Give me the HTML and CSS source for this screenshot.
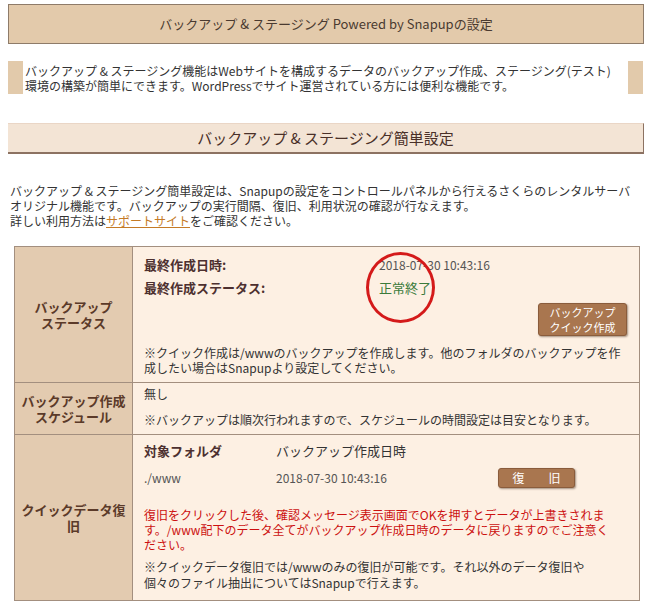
FILE: index.html
```html
<!DOCTYPE html>
<html lang="ja">
<head>
<meta charset="utf-8">
<title>バックアップ &amp; ステージング</title>
<link rel="stylesheet" href="styles.css">
</head>
<body>
<div class="page">
  <h1 class="title-box">バックアップ &amp; ステージング Powered by Snapupの設定</h1>

  <div class="intro">バックアップ &amp; ステージング機能はWebサイトを構成するデータのバックアップ作成、ステージング(テスト)<br>環境の構築が簡単にできます。WordPressでサイト運営されている方には便利な機能です。</div>

  <h2 class="section-head">バックアップ &amp; ステージング簡単設定</h2>

  <p class="lead">バックアップ &amp; ステージング簡単設定は、Snapupの設定をコントロールパネルから行えるさくらのレンタルサーバ<br>オリジナル機能です。バックアップの実行間隔、復旧、利用状況の確認が行なえます。<br>詳しい利用方法は<a class="link" href="#">サポートサイト</a>をご確認ください。</p>

  <table class="settings">
    <tr>
      <th class="head-cell">バックアップ<br>ステータス</th>
      <td class="data-cell status-cell">
        <div class="status-grid">
          <span class="label">最終作成日時:</span><span class="value">2018-07-30 10:43:16</span>
          <span class="label">最終作成ステータス:</span><span class="value ok">正常終了</span>
        </div>
        <div class="btn-row"><button class="btn btn-quick">バックアップ<br>クイック作成</button></div>
        <p class="note note-status">※クイック作成は/wwwのバックアップを作成します。他のフォルダのバックアップを作<br>成したい場合はSnapupより設定してください。</p>
        <span class="circle"></span>
      </td>
    </tr>
    <tr>
      <th class="head-cell">バックアップ作成<br>スケジュール</th>
      <td class="data-cell schedule-cell">
        <div class="line">無し</div>
        <p class="note note-sched">※バックアップは順次行われますので、スケジュールの時間設定は目安となります。</p>
      </td>
    </tr>
    <tr>
      <th class="head-cell">クイックデータ復<br>旧</th>
      <td class="data-cell restore-cell">
        <div class="restore-grid">
          <span class="label">対象フォルダ</span><span class="col-head">バックアップ作成日時</span><span></span>
          <span class="value">./www</span><span class="value">2018-07-30 10:43:16</span><span><button class="btn btn-restore">復　　旧</button></span>
        </div>
        <p class="warn">復旧をクリックした後、確認メッセージ表示画面でOKを押すとデータが上書きされま<br>す。/www配下のデータ全てがバックアップ作成日時のデータに戻りますのでご注意く<br>ださい。</p>
        <p class="note note-restore">※クイックデータ復旧では/wwwのみの復旧が可能です。それ以外のデータ復旧や<br>個々のファイル抽出についてはSnapupで行えます。</p>
      </td>
    </tr>
  </table>
</div>
</body>
</html>
```

FILE: styles.css
```css
html, body {
  margin: 0;
  padding: 0;
  background: #ffffff;
}

body {
  padding: 4px 0 0 8px;
  font-family: "Noto Sans CJK JP", "Noto Sans", sans-serif;
  font-size: 12px;
  color: #333333;
}

.page {
  width: 636px;
}

.title-box {
  margin: 0;
  height: 38px;
  line-height: 38px;
  border: 1px solid #8e7b69;
  background: #e3caab;
  text-align: center;
  font-size: 13px;
  font-weight: normal;
  color: #4a3a30;
}

.intro {
  margin-top: 17px;
  width: 603px;
  height: 29px;
  padding: 2px 0 2px 2px;
  border-left: 15px solid #e2caab;
  border-right: 15px solid #e2caab;
  line-height: 15px;
  white-space: nowrap;
  color: #333333;
}

.section-head {
  margin: 29px 0 0 0;
  height: 28px;
  line-height: 28px;
  background: #f3e4d5;
  border-top: 1px solid #ead6c6;
  border-bottom: 2px solid #8c7262;
  border-right: 1px solid #8c7262;
  text-align: center;
  font-size: 15px;
  font-weight: normal;
  color: #4a3028;
}

.lead {
  margin: 29px 0 0 0;
  padding-left: 2px;
  line-height: 15px;
  white-space: nowrap;
}

.link {
  color: #c47a26;
  text-decoration: underline;
}

.settings {
  margin: 18px 0 0 6px;
  width: 626px;
  border-collapse: collapse;
}

.head-cell {
  width: 117px;
  padding: 0;
  background: #e3cbb0;
  border: 1px solid #a38f7f;
  color: #5b3a29;
  font-size: 13px;
  font-weight: bold;
  line-height: 16px;
  text-align: center;
  vertical-align: middle;
}

.data-cell {
  position: relative;
  background: #fdf0e3;
  border: 1px solid #a38f7f;
  padding: 0 12px 0 11px;
  vertical-align: top;
  line-height: 16px;
}

.status-cell {
  padding-top: 10px;
  padding-bottom: 7px;
}

.status-grid {
  display: grid;
  grid-template-columns: 235px auto;
  row-gap: 7px;
}

.label {
  font-weight: bold;
  color: #4d3030;
  font-size: 13px;
}

.value {
  color: #555555;
}

.ok {
  color: #3a7a3a;
  font-size: 13px;
}

.btn-row {
  display: flex;
  justify-content: flex-end;
  margin-top: 7px;
}

.btn {
  font-family: "Noto Sans CJK JP", "Noto Sans", sans-serif;
  background: #a9764f;
  color: #ffffff;
  border: 1px solid #8a5c3c;
  border-radius: 3px;
  box-shadow: 1px 1px 2px rgba(60, 30, 10, 0.45);
  padding: 0;
  cursor: pointer;
}

.btn-quick {
  width: 89px;
  height: 33px;
  font-size: 11px;
  line-height: 15px;
}

.btn-restore {
  width: 77px;
  height: 20px;
  font-size: 12px;
  line-height: 18px;
  display: block;
}

.note {
  margin: 10px 0 0 0;
  line-height: 15px;
  white-space: nowrap;
  color: #333333;
}

.note-status {
  margin-top: 9px;
}

.schedule-cell {
  padding-top: 3px;
  padding-bottom: 6px;
}

.note-sched {
  margin-top: 10px;
  line-height: 16px;
}

.restore-cell {
  padding-top: 8px;
  padding-bottom: 9px;
}

.restore-grid {
  display: grid;
  grid-template-columns: 132px 222px auto;
  grid-template-rows: 16px 20px;
  row-gap: 9px;
  align-items: center;
}

.col-head {
  color: #333333;
  font-size: 13px;
}

.warn {
  margin: 19px 0 0 0;
  color: #cc1010;
  line-height: 15px;
  white-space: nowrap;
}

.note-restore {
  margin-top: 7px;
  line-height: 16px;
}

.circle {
  position: absolute;
  left: 233px;
  top: 5px;
  width: 63px;
  height: 65px;
  border: 3px solid #d41a1a;
  border-radius: 50%;
  pointer-events: none;
}
```
